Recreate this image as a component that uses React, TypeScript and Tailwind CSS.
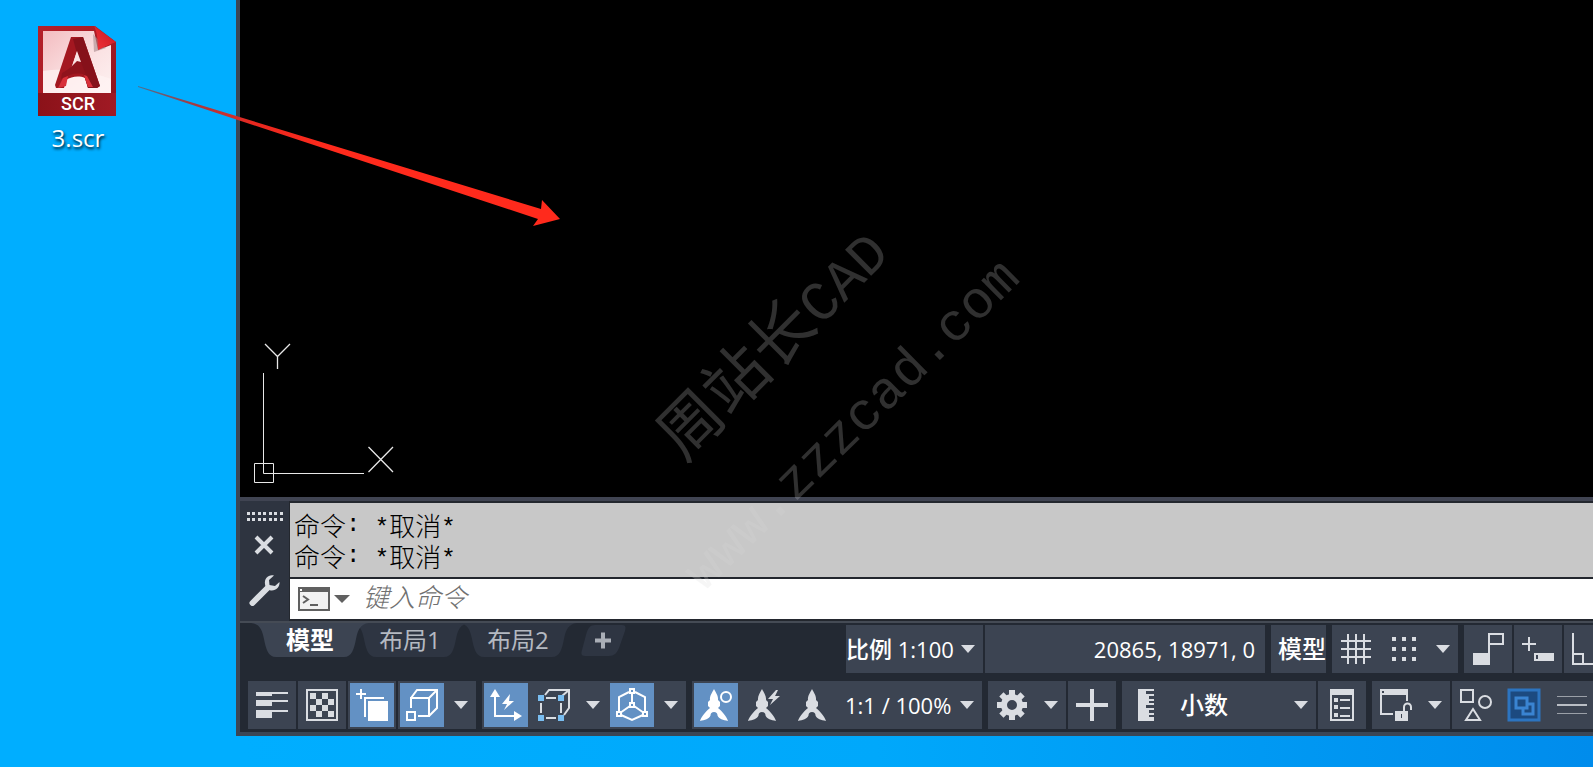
import type { ReactNode } from "react";
import clsx from "clsx";

const CJK = "font-['Open_Sans','Noto_Sans_CJK_SC',sans-serif]";

/* Small pieces */

function Caret({ className = "fill-[#dadde2]" }: { className?: string }) {
  return (
    <svg width="14" height="8" viewBox="0 0 14 8" className={className} aria-hidden="true">
      <path d="M0 0H14L7 8Z" />
    </svg>
  );
}

function CaretButton({ label }: { label: string }) {
  return (
    <button aria-label={label} className="flex h-12 w-[30px] items-center justify-center">
      <Caret />
    </button>
  );
}

function IconButton({
  label,
  active = false,
  children,
}: {
  label: string;
  active?: boolean;
  children: ReactNode;
}) {
  return (
    <button
      aria-label={label}
      aria-pressed={active}
      className="flex size-12 shrink-0 items-center justify-center"
    >
      <svg
        width="44"
        height="44"
        viewBox="0 0 44 44"
        fill="none"
        strokeWidth="2"
        className={clsx(
          active ? "bg-[#6391c4] text-white" : "text-[#dadde2]",
          "stroke-current",
        )}
      >
        {children}
      </svg>
    </button>
  );
}

function Cell({ className, children }: { className?: string; children: ReactNode }) {
  return (
    <div className={clsx("flex h-12 shrink-0 items-center bg-[#3c4452]", className)}>
      {children}
    </div>
  );
}

function Solid({ d }: { d: string }) {
  return <path d={d} fill="currentColor" stroke="none" />;
}

const SCALE_MARK =
  "M20 6C22 10 24.500 13 24 17L26 19V23L24 25C28 28 33 34 34 38C29 37 25 36 23.500 32.500A3.500 3.500 0 0 0 16.500 32.500C15 36 11 37 6 38C7 34 12 28 16 25L14 23V19L16 17C15.500 13 18 10 20 6Z";

/* Desktop */

function DesktopFile() {
  return (
    <a
      href="#3.scr"
      className="mt-[26px] ml-[38px] flex w-[80px] flex-col items-center text-white"
    >
      <svg width="80" height="92" viewBox="0 0 80 92" aria-hidden="true">
        <defs>
          <linearGradient id="frame" x1="0" y1="0" x2="1" y2="1">
            <stop offset="0" stopColor="#b5202a" />
            <stop offset="0.5" stopColor="#a81a24" />
            <stop offset="1" stopColor="#86131b" />
          </linearGradient>
          <linearGradient id="sheet" x1="0" y1="0" x2="1" y2="1">
            <stop offset="0" stopColor="#f3bcc0" />
            <stop offset="0.6" stopColor="#fbe3e4" />
            <stop offset="1" stopColor="#fdf1f1" />
          </linearGradient>
          <linearGradient id="footer" x1="0" x2="1">
            <stop offset="0" stopColor="#8b1219" />
            <stop offset="1" stopColor="#a01a24" />
          </linearGradient>
          <linearGradient id="fold" x1="0" y1="1" x2="1" y2="0">
            <stop offset="0" stopColor="#f2323a" />
            <stop offset="1" stopColor="#c4161f" />
          </linearGradient>
        </defs>
        <path d="M0 0H57L78 16V90H0Z" fill="url(#frame)" />
        <path d="M0 67H78V90H0Z" fill="url(#footer)" />
        <path d="M5 5H56L60 24L73 19V67H5Z" fill="url(#sheet)" />
        <path d="M5 45C24 42 50 44 73 53V67H5Z" fill="#fff4f4" opacity="0.7" />
        <path d="M55 8L56 26L68 22Z" fill="#a98a8e" opacity="0.6" />
        <path d="M56 0L78 16C72 18 66 21 60 24C60 14 59 6 56 0Z" fill="url(#fold)" />
        <path
          d="M33 11H45L62 60L59 62H50L47 52C40 49 33 51 28 54L26 62H18L17 59ZM39 25L33 44C37 41 41 37 43 35Z"
          fill="#a31720"
          fillRule="evenodd"
        />
        <path d="M45 11L62 60L59 62H50L38 24L35 13Z" fill="#86111a" />
        <path d="M39 25L33 43C37 41 41 37 43 36Z" fill="#fbe3e4" />
        <path d="M24 47C32 43 36 38 39 35L43 36L48 49C39 46 32 48 23 53Z" fill="#8f131c" />
        <path d="M25 52L30 50L28 60L20 62Z" fill="#d8303a" />
        <path d="M49 50L55 61L50 61L46 49Z" fill="#d8303a" />
        <text
          x="40"
          y="84"
          textAnchor="middle"
          className="fill-white font-[Roboto,sans-serif] text-[18px] font-medium"
        >
          SCR
        </text>
      </svg>
      <span
        className={clsx(
          CJK,
          "text-[24px] leading-[40px] [text-shadow:1px_2px_3px_rgba(0,0,0,0.9)]",
        )}
      >
        3.scr
      </span>
    </a>
  );
}

function DragArrow() {
  return (
    <svg
      width="570"
      height="240"
      viewBox="0 0 570 240"
      className="pointer-events-none absolute top-0 left-0"
      aria-hidden="true"
    >
      <defs>
        <linearGradient id="drag" gradientUnits="userSpaceOnUse" x1="139" y1="86" x2="330" y2="145">
          <stop offset="0" stopColor="#4d6f90" />
          <stop offset="0.3" stopColor="#a8383e" />
          <stop offset="0.6" stopColor="#e8281f" />
          <stop offset="1" stopColor="#ff2a1c" />
        </linearGradient>
      </defs>
      <path d="M138 86L541 209L542 200L560 219L533 226L538 219L138 87Z" fill="url(#drag)" />
    </svg>
  );
}

function Watermark() {
  return (
    <svg
      width="1100"
      height="640"
      viewBox="0 0 1100 640"
      className="pointer-events-none absolute top-0 left-0 fill-[#d8d8d8] opacity-[0.22]"
    >
      <g transform="translate(684 463) rotate(-45)">
        <text className="font-['Noto_Sans_CJK_SC',sans-serif] text-[64px]">周站长</text>
        <text x="193" className="font-['Liberation_Mono',monospace] text-[56px]">
          CAD
        </text>
      </g>
      <g transform="translate(704 592) rotate(-44.5)">
        <text className="font-['Liberation_Mono',monospace] text-[53px]">www.zzzcad.com</text>
      </g>
    </svg>
  );
}

/* Drawing window */

function UcsIcon() {
  return (
    <svg width="160" height="160" viewBox="0 0 160 160" fill="none" className="stroke-[#e8e8e8]">
      <path d="M23.5 36V136.5H124M14.5 126.5H33.5V145.5H14.5Z" />
      <path d="M25 7L37.5 19.5L50 7M37.5 19.5V32M128.5 110L153 135M153 110L128.5 135" strokeWidth="1.3" />
    </svg>
  );
}

function LogLine() {
  return (
    <p className="flex h-[31px] items-center">
      命令
      <span className="whitespace-pre font-['Liberation_Mono',monospace] text-[24px] leading-6">
        :{" "}
      </span>
      <span className="pt-2 font-['Liberation_Mono',monospace] text-[24px] leading-6">*</span>
      取消
      <span className="pt-2 font-['Liberation_Mono',monospace] text-[24px] leading-6">*</span>
    </p>
  );
}

function CommandPanel() {
  return (
    <section className="flex shrink-0 border-b-2 border-[#454b55] bg-[#23272e]">
      <div className="flex w-[49px] shrink-0 flex-col items-center bg-[#2e3440] pt-[11px]">
        <svg width="36" height="9" viewBox="0 0 36 9" className="fill-[#dadde2]">
          {[0, 5, 11, 16, 22, 27, 33].map((x) => (
            <path key={x} d={`M${x} 0h3v3h-3zM${x} 6h3v3h-3z`} />
          ))}
        </svg>
        <button aria-label="关闭" className="mt-[13px]">
          <svg width="22" height="22" viewBox="0 0 22 22" className="stroke-[#dadde2]" strokeWidth="4">
            <path d="M2 3L18 19M18 3L2 19" />
          </svg>
        </button>
        <button aria-label="自定义" className="mt-[18px]">
          <svg width="32" height="32" viewBox="0 0 32 32">
            <path
              d="M3.500 29L18 14.500"
              fill="none"
              stroke="#dadde2"
              strokeWidth="6"
              strokeLinecap="round"
            />
            <path
              d="M25 1.500C20 0 15 4 16 10C16 13 19 16 22 16.500C27 17 31 13 30.500 8L26 12L20.500 11L20 6Z"
              fill="#dadde2"
            />
          </svg>
        </button>
      </div>
      <div className="flex min-w-0 flex-1 flex-col gap-[2px] py-[2px] pl-[1px]">
        <div className="h-[74px] bg-[#c8c8c8] pt-[6px] pl-[4px] font-['Noto_Sans_CJK_SC',sans-serif] text-[26px] leading-[26px] font-light text-black">
          <LogLine />
          <LogLine />
        </div>
        <div className="flex h-10 items-center bg-white pl-2">
          <button aria-label="最近使用的命令" className="flex items-center gap-1">
            <svg width="32" height="24" viewBox="0 0 32 24" fill="none" stroke="#606060" strokeWidth="2">
              <path d="M1 1H31V23H1Z" fill="#f2f2f2" />
              <path d="M0 0H32V5H0Z" fill="#606060" stroke="none" />
              <path d="M2 2H4V4H2Z" fill="#fff" stroke="none" />
              <path d="M5 9L10 12.500L5 16M12 18H20" />
            </svg>
            <svg width="16" height="8" viewBox="0 0 16 8" className="fill-[#606060]">
              <path d="M0 0H16L8 8Z" />
            </svg>
          </button>
          <input
            aria-label="命令"
            placeholder="键入命令"
            className="ml-[13px] min-w-0 flex-1 pb-[6px] font-['Noto_Sans_CJK_SC',sans-serif] text-[26px] leading-[34px] font-light italic outline-none placeholder:text-[#707070]"
          />
        </div>
      </div>
    </section>
  );
}

function LayoutTab({ label, active = false }: { label: string; active?: boolean }) {
  return (
    <button
      role="tab"
      aria-selected={active}
      className={clsx(
        "relative flex h-[34px] w-[118px] items-center justify-center text-[24px] leading-[34px]",
        active ? "z-10 -mr-2 font-bold text-white" : "-ml-[10px] text-[#b4b9c1]",
      )}
    >
      <svg
        width="118"
        height="34"
        viewBox="0 0 118 34"
        className={clsx("absolute inset-0", active ? "fill-[#3c4452]" : "fill-[#2e3542]")}
      >
        <path d="M0 0C9 1 11 7 13 16C15 26 17 34 25 34H93C101 34 103 26 105 16C107 7 109 1 118 0Z" />
      </svg>
      <span className="relative">{label}</span>
    </button>
  );
}

function LayoutTabs() {
  return (
    <div role="tablist" className="flex w-[606px] shrink-0 items-start pl-[11px]">
      <LayoutTab label="模型" active />
      <LayoutTab label="布局1" />
      <LayoutTab label="布局2" />
      <button aria-label="新建布局" className="mt-[2px] ml-[4px]">
        <svg width="46" height="31" viewBox="0 0 46 31">
          <path d="M14 0H41C45 0 45 3 44 6L38 23C36 28 33 31 28 31H4C0 31 0 28 1 25L5 10C7 3 9 0 14 0Z" fill="#2e3542" />
          <path d="M14 15.500H30M22 7.500V23.500" stroke="#a9aeb6" strokeWidth="4" />
        </svg>
      </button>
    </div>
  );
}

function DrawingStatus() {
  return (
    <div className="flex shrink-0 pt-[2px] text-white">
      <Cell className="mr-[2px] w-[137px]">
        <button className="flex w-full items-center gap-[7px] text-[22px] whitespace-nowrap">
          <span>
            <span className="text-[23px] font-medium">比例</span> 1:100
          </span>
          <Caret />
        </button>
      </Cell>
      <Cell className="mr-[6px] w-[280px] justify-end pr-[10px] text-[22px]">20865, 18971, 0</Cell>
      <Cell className="mr-[6px] w-[55px] overflow-hidden pl-[7px]">
        <button className="text-[24px] font-medium whitespace-nowrap">模型</button>
      </Cell>
      <Cell className="mr-[6px]">
        <IconButton label="栅格">
          <path d="M14 7V37M22 7V37M30 7V37M7 14H37M7 22H37M7 30H37" />
        </IconButton>
        <IconButton label="捕捉">
          {[10, 20, 30].map((y) => (
            <Solid key={y} d={`M10 ${y}h4v4h-4zM20 ${y}h4v4h-4zM30 ${y}h4v4h-4z`} />
          ))}
        </IconButton>
        <CaretButton label="捕捉选项" />
      </Cell>
      <Cell className="mr-[2px]">
        <IconButton label="推断约束">
          <Solid d="M7 26H24V38H7Z" />
          <path d="M23 38V7H37V17H23" />
        </IconButton>
      </Cell>
      <Cell className="mr-[2px]">
        <IconButton label="动态输入">
          <path d="M6 17H20M13 10V24" />
          <Solid d="M18 26H38V34H18Z" />
          <path d="M21 28V32" stroke="#3c4452" />
        </IconButton>
      </Cell>
      <Cell>
        <IconButton label="正交">
          <path d="M7 6V37H44M7 27H17V37" />
        </IconButton>
      </Cell>
    </div>
  );
}

function ToolStatus() {
  return (
    <div className="mt-2 flex pl-2 text-white">
      <Cell className="mr-[2px]">
        <IconButton label="线宽">
          <Solid d="M6 9H38V11H22V13H6ZM6 17H38V19H22V23H6ZM6 27H38V29H22V35H6Z" />
        </IconButton>
      </Cell>
      <Cell className="mr-[2px]">
        <IconButton label="透明度">
          <path d="M7 7H37V37H7Z" />
          <Solid d="M10 10h6v6h-6zM22 10h6v6h-6zM16 16h6v6h-6zM28 16h6v6h-6zM10 22h6v6h-6zM22 22h6v6h-6zM16 28h6v6h-6zM28 28h6v6h-6z" />
        </IconButton>
      </Cell>
      <Cell className="mr-[2px]">
        <IconButton label="选择循环" active>
          <path d="M6 11H16M11 6V16M34 15H15V34" />
          <Solid d="M18 18H38V38H18Z" />
        </IconButton>
      </Cell>
      <Cell className="mr-[6px]">
        <IconButton label="三维对象捕捉" active>
          <path d="M7 29H15V37H7ZM11 25V15H29V33H18M11 15L17 7H37V25L29 33M29 15L37 7" />
        </IconButton>
        <CaretButton label="三维对象捕捉选项" />
      </Cell>
      <Cell className="mr-[6px]">
        <IconButton label="动态 UCS" active>
          <path d="M11 12V33H32" />
          <Solid d="M11 6L16 14H6ZM38 33L30 28V38ZM26 11L18 21H23L20 27L30 18H25Z" />
        </IconButton>
        <IconButton label="选择过滤">
          <path d="M14 15H24M14 35H24M9 20V30M29 20V30M13 12L17 7H37V25L32 32M30 13L37 7" />
          <path
            d="M6 12h6v6h-6zM26 12h6v6h-6zM6 32h6v6h-6zM26 32h6v6h-6z"
            fill="#79bdf0"
            stroke="none"
          />
        </IconButton>
        <CaretButton label="选择过滤选项" />
        <IconButton label="小控件" active>
          <path d="M19 9L9 14V29M25 9L35 14V29M11 32L22 37L33 32M22 11V20M20 23L10 30M24 23L34 30" />
          <path d="M20 6h4v4h-4zM20 20h4v4h-4zM7 29h4v4h-4zM33 29h4v4h-4z" />
        </IconButton>
        <CaretButton label="小控件选项" />
      </Cell>
      <Cell className="mr-[6px] w-[290px]">
        <IconButton label="注释可见性" active>
          <Solid d={SCALE_MARK} />
          <circle cx="32" cy="14" r="5" />
        </IconButton>
        <IconButton label="自动缩放">
          <Solid d={SCALE_MARK} />
          <Solid d="M34 7L26 16H31L28 22L38 13H33L36 7Z" />
        </IconButton>
        <IconButton label="注释比例">
          <g transform="translate(2 0)">
            <Solid d={SCALE_MARK} />
          </g>
        </IconButton>
        <button className="flex flex-1 items-center justify-between pr-2 pl-[9px] text-[22px] whitespace-nowrap">
          1:1 / 100%
          <Caret />
        </button>
      </Cell>
      <Cell className="mr-[2px]">
        <IconButton label="切换工作空间">
          <circle cx="22" cy="22" r="8" strokeWidth="6" />
          <path
            d="M22 7V13M22 31V37M7 22H13M31 22H37M11.400 11.400L15.600 15.600M28.400 28.400L32.600 32.600M32.600 11.400L28.400 15.600M15.600 28.400L11.400 32.600"
            strokeWidth="6"
          />
        </IconButton>
        <CaretButton label="工作空间选项" />
      </Cell>
      <Cell className="mr-[6px]">
        <IconButton label="注释监视器">
          <path d="M6 22H38M22 6V38" strokeWidth="4" />
        </IconButton>
      </Cell>
      <Cell className="relative mr-[2px] w-[194px]">
        <svg
          width="16"
          height="32"
          viewBox="0 0 16 32"
          className="pointer-events-none absolute left-4 fill-[#dadde2]"
        >
          <path d="M0 0H16V2H8V5H16V7H11V10H16V12H11V14H16V16H8V19H16V21H11V24H16V26H11V28H16V32H0Z" />
        </svg>
        <select
          aria-label="图形单位"
          className="h-12 w-full appearance-none bg-transparent pl-[58px] text-[24px] font-medium outline-none"
        >
          <option>小数</option>
        </select>
        <div className="pointer-events-none absolute right-2">
          <Caret />
        </div>
      </Cell>
      <Cell className="mr-[6px]">
        <IconButton label="快捷特性">
          <path d="M11 7H33V37H11Z" />
          <Solid d="M10 6H34V12H10ZM14 15h4v4h-4zM14 22h4v4h-4zM14 30h4v4h-4z" />
          <path d="M20 17H30M20 25H30M20 33H30" />
        </IconButton>
      </Cell>
      <Cell className="mr-[2px]">
        <IconButton label="锁定用户界面">
          <path d="M19 31H7V7M33 12V18" />
          <Solid d="M6 6H34V12H6ZM21 28H34V38H21Z" />
          <path d="M8 9H10" stroke="#3c4452" />
          <path d="M30 28V24A3.500 3.500 0 0 1 37 24V27" />
          <path d="M27.500 31V35" stroke="#3c4452" strokeWidth="1" />
        </IconButton>
        <CaretButton label="锁定选项" />
      </Cell>
      <Cell>
        <IconButton label="隔离对象">
          <path d="M7 7H19V19H7ZM19 26L26 37H12Z" />
          <circle cx="31" cy="19" r="6" />
        </IconButton>
        <IconButton label="硬件加速">
          <path d="M7 7H37V37H7Z" fill="#1c4a80" stroke="#2c74c0" strokeWidth="3" />
          <path d="M14 15H25V25H14ZM25 21H31V31H21V25" stroke="#3a84d2" strokeWidth="3" />
        </IconButton>
        <IconButton label="自定义">
          <path d="M7 13.500H37M7 30.500H37" strokeWidth="1" opacity="0.6" />
          <path d="M7 22H37" opacity="0.8" />
        </IconButton>
      </Cell>
    </div>
  );
}

export default function App() {
  return (
    <main
      className={clsx(
        CJK,
        "relative flex h-screen overflow-hidden bg-[#00adff] bg-linear-to-r from-[#00aeff] from-15% via-[#00a8fb] via-55% to-[#008cec] pb-[31px]",
      )}
    >
      <div className="w-[236px] shrink-0">
        <DesktopFile />
      </div>
      <div className="flex min-w-0 flex-1 flex-col overflow-hidden border-b-4 border-l-4 border-[#3b4655] bg-[#232933]">
        <div className="flex min-h-0 flex-1 items-end border-b-4 border-[#404452] bg-black">
          <UcsIcon />
        </div>
        <CommandPanel />
        <div className="flex h-[50px] shrink-0">
          <LayoutTabs />
          <DrawingStatus />
        </div>
        <div className="h-[59px] shrink-0">
          <ToolStatus />
        </div>
      </div>
      <DragArrow />
      <Watermark />
    </main>
  );
}
